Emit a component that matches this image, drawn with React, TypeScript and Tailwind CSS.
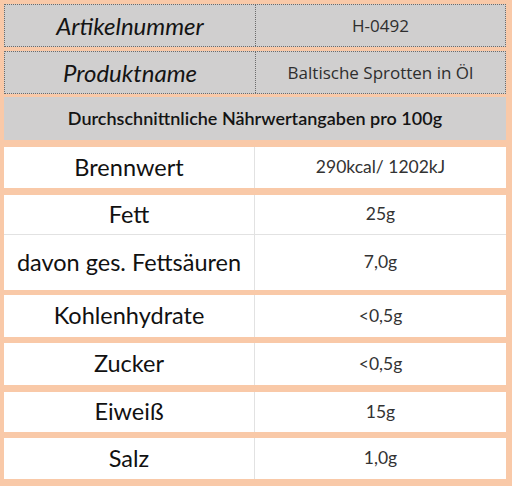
import React from "react";

// Product info + nutrition facts table

const LABEL_FONT = { fontFamily: "Lato, 'Noto Sans', sans-serif" };
const VALUE_FONT = { fontFamily: "'Open Sans', 'Noto Sans', sans-serif" };

interface InfoRowProps {
  label: string;
  value: string;
  className?: string;
}

function InfoRow({ label, value, className = "" }: InfoRowProps) {
  return (
    <div className={`flex h-[43px] bg-[#d0cfcf] border border-dotted border-[#6b6b6b] ${className}`}>
      <div
        className="w-[251px] flex items-center justify-center italic text-[24px] text-[#141414] border-r border-dotted border-[#6b6b6b]"
        style={LABEL_FONT}
      >
        {label}
      </div>
      <div className="flex-1 flex items-center justify-center text-[17px] text-[#2e2e2e]" style={VALUE_FONT}>
        {value}
      </div>
    </div>
  );
}

interface NutriRowProps {
  label: string;
  value: string;
  height: string;
  className?: string;
}

function NutriRow({ label, value, height, className = "" }: NutriRowProps) {
  return (
    <div className={`flex bg-white ${height} ${className}`}>
      <div
        className="w-[251px] flex items-center justify-center text-[23.5px] text-[#111] border-r border-[#e2e2e2]"
        style={LABEL_FONT}
      >
        {label}
      </div>
      <div className="flex-1 flex items-center justify-center text-[17.5px] text-[#333]" style={LABEL_FONT}>
        {value}
      </div>
    </div>
  );
}

export default function App() {
  return (
    <div className="w-[512px] h-[486px] bg-[#f9c9a8] pt-[4px] pl-[4px] pr-[6px] overflow-hidden">
      <InfoRow label="Artikelnummer" value="H-0492" />
      <InfoRow label="Produktname" value="Baltische Sprotten in Öl" className="mt-[4px]" />

      <div
        className="mt-[3px] h-[43px] bg-[#d0cfcf] flex items-center justify-center text-[18px] font-semibold text-[#141414]"
        style={LABEL_FONT}
      >
        Durchschnittnliche Nährwertangaben pro 100g
      </div>

      <NutriRow label="Brennwert" value="290kcal/ 1202kJ" height="h-[41px]" className="mt-[7px]" />

      <div className="mt-[7px] flex flex-col">
        <NutriRow label="Fett" value="25g" height="h-[40px]" className="border-b border-[#e2e2e2]" />
        <NutriRow label="davon ges. Fettsäuren" value="7,0g" height="h-[55px]" />
      </div>

      <NutriRow label="Kohlenhydrate" value="<0,5g" height="h-[42px]" className="mt-[5px]" />
      <NutriRow label="Zucker" value="<0,5g" height="h-[42px]" className="mt-[6px]" />
      <NutriRow label="Eiweiß" value="15g" height="h-[40px]" className="mt-[7px]" />
      <NutriRow label="Salz" value="1,0g" height="h-[41px]" className="mt-[6px]" />
    </div>
  );
}
